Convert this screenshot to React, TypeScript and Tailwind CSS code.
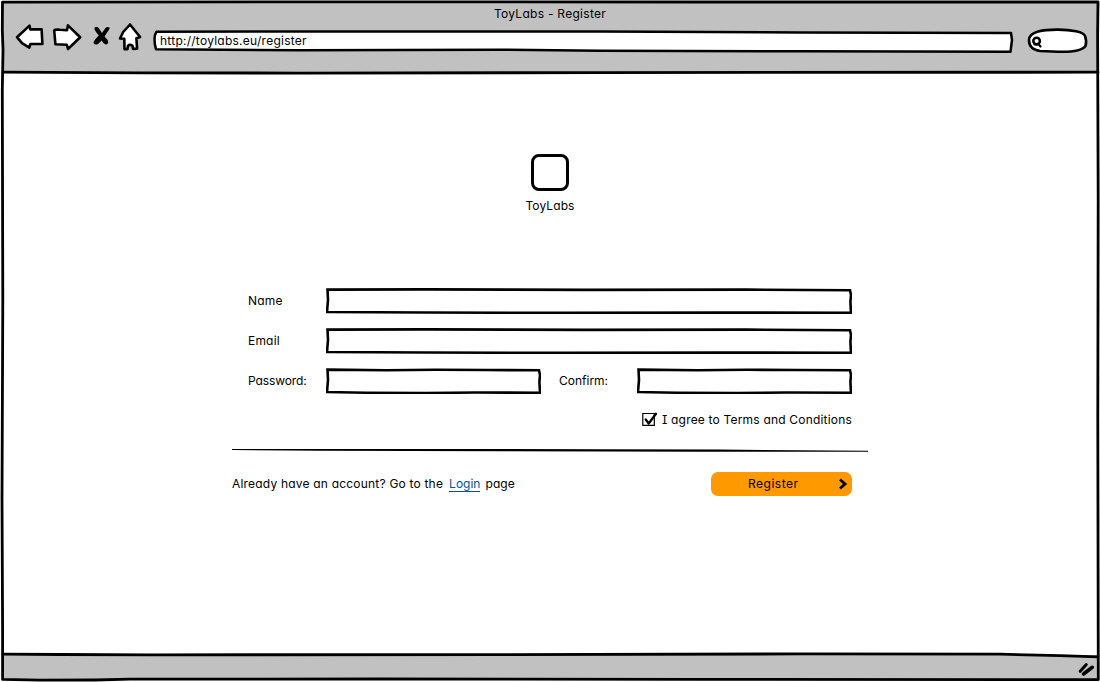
import type { ReactNode } from "react";

const ink = { fill: "none", stroke: "#000", strokeLinejoin: "round", strokeLinecap: "round" } as const;

function WindowFrame() {
  return (
    <svg className="pointer-events-none absolute inset-0" width="1100" height="682" viewBox="0 0 1100 682" {...ink} strokeWidth="2.8">
      <path d="M2.5 2.2L300 1.8L700 2L1098 2L1097.6 35L1098.2 200L1097.8 420L1098.3 679.6L700 679.3L380 679L130 679.2L95 680L40 680.2L2.6 679.4L2.6 630L2 500L2.8 300L2.3 90L3 50L2.3 30Z" />
      <path d="M3 72.2L140 72.8L300 73.1L600 72.6L1098 72.2" />
      <path d="M3 654.2L60 654.5L150 654.8L500 654.6L800 653.9L1000 654.2L1060 655.6L1098 656.8" />
    </svg>
  );
}

function SketchInput({ wide = false }: { wide?: boolean }) {
  return wide ? (
    <div className="h-[26px] w-[526px]">
      <svg width="526" height="26" viewBox="0 0 526 26" {...ink} strokeWidth="2.6" strokeLinejoin="miter">
        <path d="M1.5 1.6L100 1.4L260 1.9L420 1.6L524 2.3L525 7L524.4 14L525 24.8L400 24.6L240 24.9L100 24.5L1 24L2 12Z" />
      </svg>
    </div>
  ) : (
    <div className="h-[26px] w-[215px]">
      <svg width="215" height="26" viewBox="0 0 215 26" {...ink} strokeWidth="2.6" strokeLinejoin="miter">
        <path d="M1.5 1.6L60 2.2L110 1.8L160 2L213 2.3L214 7L213.4 14L214 24.7L150 24.5L100 25L40 24.7L1 24L2 12Z" />
      </svg>
    </div>
  );
}

function NavIcons() {
  return (
    <svg className="mt-[20px] ml-[14px]" width="130" height="34" viewBox="14 20 130 34" {...ink} strokeWidth="2.6">
      <path fill="#fff" d="M17 37.2L29.5 25.6L30.3 29.4L41.6 29.2L42.4 44L30.4 44L29.3 47.6L22 43.2Z" />
      <path fill="#fff" d="M54.2 30.5Q55 29.3 60 29.8L67 30.2L67.9 25.4L80.2 37.2L68 49L66.8 44.7L55.4 44.3L54.8 37Z" />
      <path stroke="none" fill="#000" d="M94.5 27.5Q97 25.6 99 28.5L102 33L105.5 28Q107.5 26 109.6 27.6Q110 29 107 32.5L104.5 36.5Q108 39.5 108.3 42.5Q107 46 104 43.5L101.5 40.5L98 44Q95 45.500 93.5 43Q93.5 41 96 38.5L98.8 35.5L96 32Q94 29 94.5 27.500Z" />
      <path fill="#fff" d="M130 24.5L140.1 37L136.4 38.2L137.1 48.6L133 48.9L132.6 45.8Q129.800 43.800 127.9 45.800L127.500 49.1L124.500 49.1L124.300 38.700L120 38.500L123.200 32Z" />
    </svg>
  );
}

function Label({ children, className = "" }: { children: ReactNode; className?: string }) {
  return <span className={`block whitespace-pre ${className}`}>{children}</span>;
}

export default function App() {
  return (
    <div className="relative flex h-[682px] w-[1100px] flex-col overflow-hidden bg-white font-['Inter',sans-serif] text-[12px] leading-4 text-black [font-feature-settings:'cv11','cv08']">
      <header className="mx-[2px] mt-[2px] h-[70px] shrink-0 bg-[#c1c1c1]">
        <div className="flex h-[18px] justify-center pt-[4px] pr-[2px]">
          <Label className="ml-[2px] tracking-[0.28px]">ToyLabs - Register</Label>
        </div>
        <div className="-mt-[20px] -ml-[2px] flex h-[72px] items-start">
          <NavIcons />
          <div className="relative mt-[30px] ml-[9px] h-[24px] w-[861px]">
            <svg className="absolute inset-0" width="861" height="24" viewBox="153 30 861 24" {...ink} strokeWidth="2.5">
              <path fill="#fff" d="M156.5 31.7L400 31.4L600 31.5L800 32.5L1011 33L1012 40L1010.5 51.8L800 51.3L600 50.7L500 49.7L300 50.2L156 49.2Q153.7 42 155 35Z" />
            </svg>
            <Label className="relative mt-[3px] ml-[7px] tracking-[0.25px]">http://toylabs.eu/register</Label>
          </div>
          <svg className="mt-[26px] ml-[12px]" width="64" height="30" viewBox="1026 26 64 30" {...ink} strokeWidth="2.6">
            <path fill="#fff" d="M1029 40C1029 31 1044 29.5 1058 29.6C1071 29.7 1084 32 1085 36Q1087 41 1085.500 46C1082 51 1068 52 1058 51.7L1040 51C1033 50 1029 46 1029 40Z" />
            <circle cx="1036.6" cy="41" r="3.3" strokeWidth="2.5" />
            <path d="M1034.500 44.500L1038.500 44.300L1040.500 46.500" strokeWidth="2.200" />
          </svg>
        </div>
      </header>

      <main className="flex h-[583px] shrink-0 flex-col">
        <div className="mt-[82px] flex flex-col items-center">
          <div className="h-[37px] w-[38px] rounded-[8px] border-[3px] border-black" />
          <Label className="mt-[7px] tracking-[0.1px]">ToyLabs</Label>
        </div>

        <form className="mt-[74px] ml-[248px] flex w-[604px] flex-col gap-[14px]">
          <div className="flex h-[26px]">
            <Label className="w-[78px] pt-[5px] tracking-[0.2px]">Name</Label>
            <SketchInput wide />
          </div>
          <div className="flex h-[26px]">
            <Label className="w-[78px] pt-[5px] tracking-[0.2px]">Email</Label>
            <SketchInput wide />
          </div>
          <div className="flex h-[26px]">
            <Label className="w-[78px] pt-[5px] tracking-[-0.1px]">Password:</Label>
            <SketchInput />
            <Label className="ml-[18px] w-[78px] pt-[5px]">Confirm:</Label>
            <SketchInput />
          </div>
        </form>

        <div className="mt-[17px] ml-[641px] flex h-[18px]">
          <svg width="18" height="18" viewBox="641 411 18 18" {...ink}>
            <path d="M642.8 413.5H654.3V425.3H642.8Z" strokeWidth="1.2" strokeLinejoin="miter" />
            <path d="M645.7 419.5L648.7 423.5L656 413.8" strokeWidth="2.3" />
          </svg>
          <Label className="mt-[1px] ml-[3px] tracking-[0.19px]">I agree to Terms and Conditions</Label>
        </div>

        <svg className="mt-[18px] ml-[232px] shrink-0" width="636" height="6" viewBox="232 447 636 6">
          <path d="M232 449L300 449L470 449L600 449.3L720 449.6L868 450.8V451.8L700 451.7L500 451.2L320 450.8L232 449.9Z" />
        </svg>

        <div className="mt-[19px] ml-[232px] flex h-[24px] w-[620px] items-center">
          <Label className="pb-[1px] tracking-[0.2px]">Already have an account? Go to the</Label>
          <a className="ml-[6px] border-b border-[#0b4f98] leading-[14px] text-[#0b4f98]">Login</a>
          <Label className="ml-[5px] pb-[1px] tracking-[0.1px]">page</Label>
          <button className="ml-auto flex h-[24px] w-[141px] items-center rounded-[7px] bg-[#ff9900] pl-[37px]">
            <Label className="pb-[1px] tracking-[0.5px]">Register</Label>
            <svg className="mr-[4px] ml-auto" width="10" height="14" viewBox="0 0 10 14" {...ink} strokeWidth="2.9" strokeLinecap="butt" strokeLinejoin="miter">
              <path d="M2 2.5L7 7L2 11.5" />
            </svg>
          </button>
        </div>
      </main>

      <footer className="mx-[2px] flex h-[25px] shrink-0 justify-end bg-[#c1c1c1]">
        <svg width="24" height="25" viewBox="1074 655 24 25" {...ink} strokeWidth="3">
          <path d="M1080.2 671.3L1086.3 664.5" />
          <path d="M1083.500 674L1092.300 667.3" strokeWidth="3.6" />
        </svg>
      </footer>
      <WindowFrame />
    </div>
  );
}
